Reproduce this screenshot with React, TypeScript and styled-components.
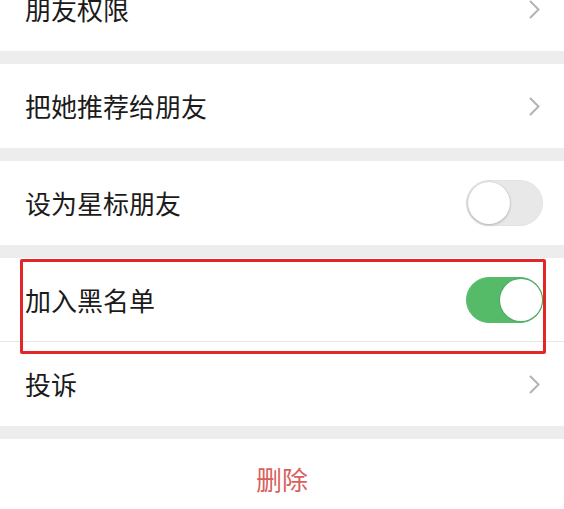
import React from "react";
import styled, { createGlobalStyle } from "styled-components";

const Global = createGlobalStyle`
  html, body { margin: 0; padding: 0; background: #ededed; }
  body { font-family: "Noto Sans CJK SC", "Noto Sans", sans-serif; overflow: hidden; }
`;

const Page = styled.div`
  position: relative;
  width: 564px;
  height: 509px;
  overflow: hidden;
  background: #ededed;
`;

const List = styled.div`
  display: flex;
  flex-direction: column;
  gap: 13px;
  margin-top: -33px;
`;

const Group = styled.div`
  display: flex;
  flex-direction: column;
  background: #fff;
`;

const Row = styled.div<{ $divider?: boolean }>`
  height: 84px;
  display: flex;
  align-items: center;
  justify-content: space-between;
  padding: 0 21px 0 25px;
  box-sizing: border-box;
  background: #fff;
  ${(p) => (p.$divider ? "box-shadow: inset 0 -1px 0 #e6e6e6;" : "")}
`;

const Label = styled.span`
  font-size: 26px;
  line-height: 1;
  color: #1b1b1b;
`;

const Chevron = styled.svg`
  width: 13px;
  height: 21px;
  margin-right: 2px;
`;

const Track = styled.div<{ $on: boolean }>`
  position: relative;
  width: 77px;
  height: 46px;
  border-radius: 23px;
  box-sizing: border-box;
  background: ${(p) => (p.$on ? "#55bb69" : "#e8e8e8")};
  border: 1.5px solid ${(p) => (p.$on ? "#55bb69" : "#e2e2e2")};
`;

const Knob = styled.div<{ $on: boolean }>`
  position: absolute;
  top: 0.5px;
  ${(p) => (p.$on ? "right: 0.5px;" : "left: 0.5px;")}
  width: 42px;
  height: 42px;
  border-radius: 50%;
  background: #fff;
  box-shadow: ${(p) =>
    p.$on ? "0 0 0 1px #4ea862" : "0 1px 3px rgba(0,0,0,0.22), 0 0 0 0.5px #d8d8d8"};
`;

const DeleteRow = styled.div`
  height: 90px;
  display: flex;
  align-items: center;
  justify-content: center;
  background: #fff;
  padding-bottom: 10px;
  box-sizing: border-box;
`;

const DeleteText = styled.span`
  font-size: 26px;
  color: #d9605c;
  line-height: 1;
`;

const Highlight = styled.div`
  position: absolute;
  left: 20px;
  top: 259px;
  width: 526px;
  height: 95px;
  box-sizing: border-box;
  border: 3px solid #e3262a;
  border-radius: 2px;
  pointer-events: none;
`;

const Arrow = () => (
  <Chevron viewBox="0 0 13 21">
    <path d="M2 2 L10.5 10.5 L2 19" fill="none" stroke="#b3b3b3" strokeWidth="2" />
  </Chevron>
);

const Toggle = ({ on }: { on: boolean }) => (
  <Track $on={on}>
    <Knob $on={on} />
  </Track>
);

export default function App() {
  return (
    <Page>
      <Global />
      <List>
        <Group>
          <Row>
            <Label>朋友权限</Label>
            <Arrow />
          </Row>
        </Group>
        <Group>
          <Row>
            <Label>把她推荐给朋友</Label>
            <Arrow />
          </Row>
        </Group>
        <Group>
          <Row>
            <Label>设为星标朋友</Label>
            <Toggle on={false} />
          </Row>
        </Group>
        <Group>
          <Row $divider>
            <Label>加入黑名单</Label>
            <Toggle on={true} />
          </Row>
          <Row>
            <Label>投诉</Label>
            <Arrow />
          </Row>
        </Group>
        <Group>
          <DeleteRow>
            <DeleteText>删除</DeleteText>
          </DeleteRow>
        </Group>
      </List>
      <Highlight />
    </Page>
  );
}
